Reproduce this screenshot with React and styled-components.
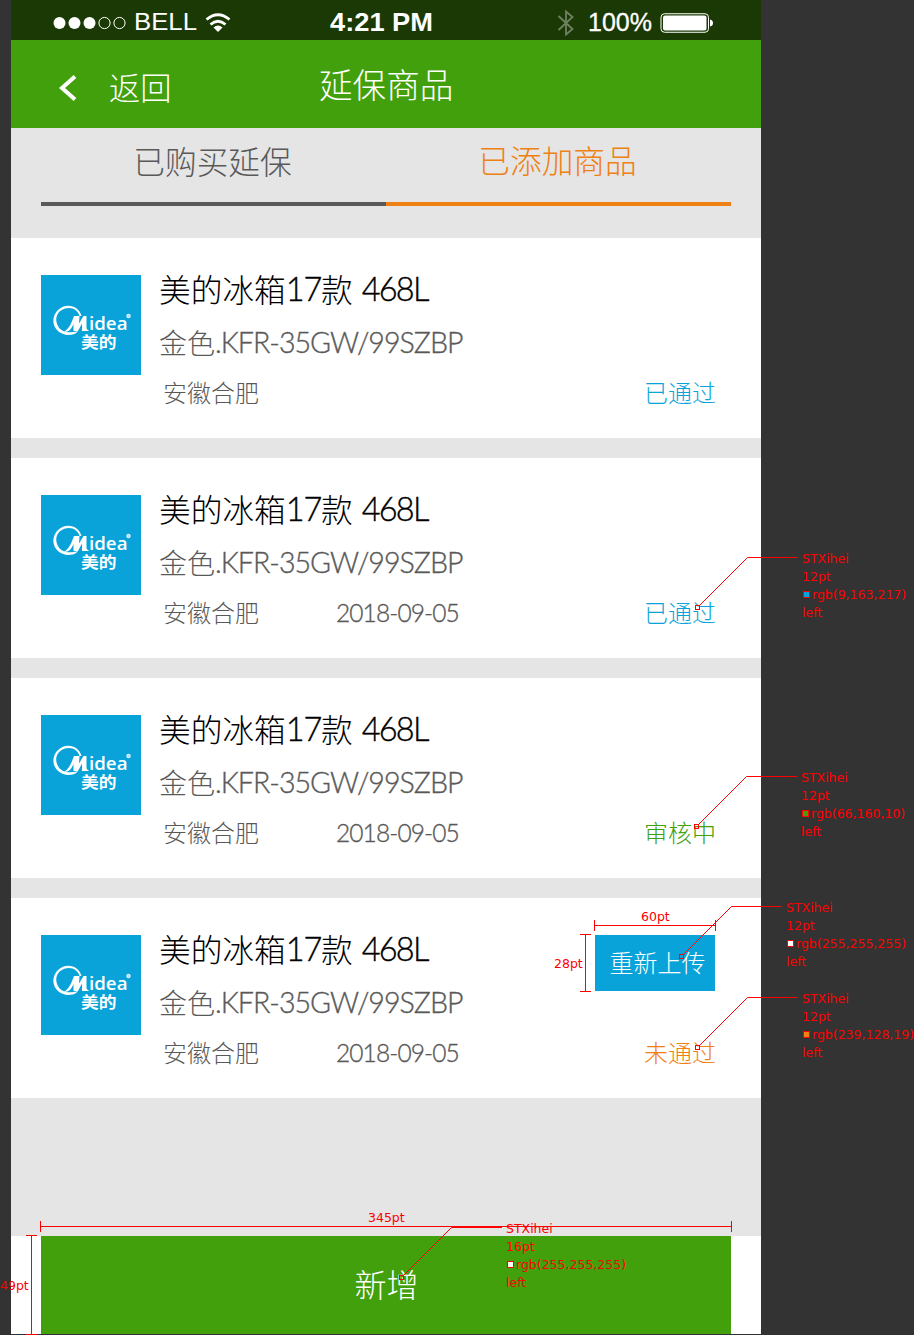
import React from 'react';
import styled, { createGlobalStyle } from 'styled-components';

const GlobalStyle = createGlobalStyle`
  *, *::before, *::after { box-sizing: border-box; }
  body { margin: 0; background: #333333; }
`;

const color = {
  green: '#42a00c',
  blue: '#09a3d9',
  orange: '#ef8013',
  gray: '#595959',
  panel: '#e5e5e5',
  red: '#ff0000',
};

const Board = styled.div`
  position: relative;
  width: 914px;
  height: 1335px;
  padding-left: 11px;
  overflow: hidden;
  background: #333333;
  font-family: Lato, 'Noto Sans CJK SC', sans-serif;
  font-weight: 300;
  white-space: nowrap;
`;

const Phone = styled.main`
  display: flex;
  flex-direction: column;
  width: 750px;
  height: 1334px;
  background: ${color.panel};
`;

const StatusBar = styled.div`
  display: flex;
  align-items: center;
  height: 40px;
  padding: 5px 47px 0 41px;
  background: #1a3905;
  color: #fff;
  font-family: 'Liberation Sans', sans-serif;
  font-weight: 400;
`;

const Signal = styled.svg`
  width: 74px;
  height: 14px;
`;

const Carrier = styled.span`
  width: 71px;
  padding-left: 8px;
  font-size: 23px;
  transform: scaleX(1.12);
  transform-origin: 8px 50%;
`;

const Wifi = styled.svg`
  width: 26px;
  height: 20px;
  margin-left: 8px;
`;

const Clock = styled.span`
  width: 108px;
  margin-left: 99px;
  font-size: 25px;
  font-weight: 700;
  transform: scaleX(1.09);
  transform-origin: left;
`;

const Bluetooth = styled.svg`
  width: 18px;
  height: 28px;
  margin-left: auto;
`;

const Charge = styled.span`
  width: 65px;
  margin-left: 13px;
  font-size: 25px;
  -webkit-text-stroke: 0.3px #fff;
`;

const Battery = styled.svg`
  width: 54px;
  height: 20px;
  margin-left: 7px;
`;

const NavBar = styled.header`
  display: grid;
  grid-template-columns: 308px 1fr;
  align-items: center;
  height: 88px;
  background: ${color.green};
  color: #fff;
`;

const Back = styled.button`
  display: flex;
  align-items: center;
  gap: 31px;
  padding: 7px 0 0 47px;
  border: 0;
  background: none;
  color: inherit;
  font: inherit;
  font-size: 31.3px;
  line-height: 40px;
`;

const NavTitle = styled.h1`
  margin: 0;
  padding-top: 2px;
  font-size: 33.6px;
  font-weight: 300;
  line-height: 44px;
`;

const Tabs = styled.nav`
  display: flex;
  height: 110px;
  padding: 0 30px;
`;

const Tab = styled.a`
  flex: 1;
  height: 78px;
  padding-right: 2px;
  border-bottom: 4px solid ${(p) => p.$tint};
  color: ${(p) => p.$tint};
  font-size: 31.7px;
  line-height: ${(p) => p.$line}px;
  text-align: center;
`;

const List = styled.section`
  display: flex;
  flex-direction: column;
  gap: 20px;
  flex: 1;
`;

const Card = styled.article`
  display: flex;
  height: 200px;
  padding: 37px 45px 0 30px;
  background: #fff;
  color: ${color.gray};
`;

const Logo = styled.svg`
  flex: none;
  width: 100px;
  height: 100px;
  background: ${color.blue};
`;

const Info = styled.div`
  flex: 1;
  padding-left: 18px;
`;

const Name = styled.h2`
  margin: -6px 0 0;
  color: #000;
  font-size: 31.7px;
  font-weight: 300;
  line-height: 42px;
`;

const Latin = styled.span`
  margin-left: ${(p) => p.$lead || 0}px;
  font-size: ${(p) => p.$size}px;
  letter-spacing: ${(p) => p.$track}px;
  vertical-align: ${(p) => p.$rise || 0}px;
  line-height: 1;
  -webkit-text-stroke: 0.35px currentColor;
`;

const Model = styled.p`
  margin: 13px 0 0;
  font-size: 28px;
  line-height: 38px;
`;

const Meta = styled.div`
  display: flex;
  align-items: center;
  height: 32px;
  margin-top: 15px;
  padding-left: 4px;
  font-size: 24px;
  line-height: 32px;
`;

const City = styled.span`
  width: 173px;
`;

const Side = styled.div`
  display: flex;
  flex-direction: column;
  align-items: flex-end;
  justify-content: space-between;
  height: 134px;
`;

const Status = styled.span`
  margin-top: auto;
  color: ${(p) => p.$tint};
  font-size: 24px;
  line-height: 32px;
`;

const Upload = styled.button`
  width: 120px;
  height: 56px;
  margin-right: 1px;
  padding: 0 0 3px 5px;
  border: 0;
  background: ${color.blue};
  color: #fff;
  font: inherit;
  font-size: 24px;
`;

const Footer = styled.footer`
  display: flex;
  height: 98px;
  padding: 0 30px;
  background: #fff;
`;

const AddButton = styled.button`
  flex: 1;
  padding: 0 0 4px 1px;
  border: 0;
  background: ${color.green};
  color: #fff;
  font: inherit;
  font-size: 32px;
`;

const Marks = styled.svg`
  position: absolute;
  inset: 0;
  width: 914px;
  height: 1335px;
  fill: none;
  stroke: ${color.red};
  stroke-width: 1;
`;

const Label = styled.div`
  position: absolute;
  left: ${(p) => p.$x}px;
  top: ${(p) => p.$y}px;
  color: ${color.red};
  font: 400 12.5px/18px 'DejaVu Sans', sans-serif;
`;

const Note = styled(Label)`
  display: flex;
  flex-direction: column;
`;

const Swatch = styled.span`
  display: inline-block;
  width: 7px;
  height: 7px;
  margin: 0 2px 1px 1px;
  border: 1px solid ${color.red};
  background: ${(p) => p.$fill};
`;

const items = [
  { status: '已通过', tint: color.blue },
  { date: '2018-09-05', status: '已通过', tint: color.blue },
  { date: '2018-09-05', status: '审核中', tint: color.green },
  { date: '2018-09-05', status: '未通过', tint: color.orange, upload: true },
];

const notes = [
  { x: 802, y: 550, size: '12pt', rgb: '9,163,217', line: 'M798 557.5H747.5L699 606', dot: [695.5, 605.5] },
  { x: 801, y: 769, size: '12pt', rgb: '66,160,10', line: 'M797 776.5H746.5L698 825', dot: [694.5, 824.5] },
  { x: 786, y: 899, size: '12pt', rgb: '255,255,255', line: 'M782 906.5H731.5L683 955', dot: [679.5, 954.5] },
  { x: 802, y: 990, size: '12pt', rgb: '239,128,19', line: 'M798 997.5H747.5L699 1046', dot: [695.5, 1045.5] },
  { x: 506, y: 1220, size: '16pt', rgb: '255,255,255', line: 'M502 1227.5H451.5L403 1276', dot: [399.5, 1275.5] },
];

function MideaLogo() {
  return (
    <Logo viewBox="0 0 100 100" fill="#fff">
      <path d="M40.500 41C38 30 24 27 16 36C8 46 14 59 27 60C31 60 35 59 37 56C29 58.500 21 57.500 17.500 52C12.500 44 16 36 24 33.500C31 31.500 37 35 38.500 41Z" />
      <path d="M23 57C29 53 31 46 33 41H38.500L38 48.500L42.500 41H45.500V53Q45.500 55 47.500 55V56H41V48.500L37 56H32.500V49C30.500 54 28 57 23 57Z" />
      <text x="48" y="55" fontFamily="Open Sans, sans-serif" fontSize="18.5" fontWeight="600" textLength="38.5" lengthAdjust="spacingAndGlyphs">idea</text>
      <text x="40" y="73" fontFamily="Noto Sans CJK SC, sans-serif" fontSize="15.5" fontWeight="700" textLength="35.5" lengthAdjust="spacingAndGlyphs">美的</text>
      <circle cx="87.500" cy="41" r="1.500" fill="#8fd3ee" stroke="#d5effa" strokeWidth="1.500" />
    </Logo>
  );
}

export default function App() {
  return (
    <Board>
      <GlobalStyle />
      <Phone>
        <StatusBar>
          <Signal viewBox="0 0 74 14" fill="#fff">
            <circle cx="7.500" cy="7" r="6" />
            <circle cx="22.500" cy="7" r="6" />
            <circle cx="37.500" cy="7" r="6" />
            <circle cx="52.500" cy="7" r="5.600" fill="none" stroke="#fff" />
            <circle cx="67.500" cy="7" r="5.600" fill="none" stroke="#fff" />
          </Signal>
          <Carrier>BELL</Carrier>
          <Wifi viewBox="0 0 26 20" fill="none" stroke="#fff" strokeWidth="2.8">
            <path d="M1.500 6.500Q13 -3 24.500 6.500" />
            <path d="M5.500 11.500Q13 5 20.500 11.500" />
            <path d="M8.500 14.500Q13 10.500 17.500 14.500L13 19Z" fill="#fff" stroke="none" />
          </Wifi>
          <Clock>4:21 PM</Clock>
          <Bluetooth viewBox="0 0 18 28" fill="none" stroke="#6f8163" strokeWidth="1.8">
            <path d="M1.500 7L15.500 20L9 25.500V2.500L15.500 8L1.500 21" />
          </Bluetooth>
          <Charge>100%</Charge>
          <Battery viewBox="0 0 54 20">
            <rect x="1" y=".75" width="47.500" height="18.500" rx="3.500" fill="none" stroke="#fff" />
            <rect x="3" y="2.500" width="43.500" height="15" rx="2" fill="#fff" />
            <path d="M50 6.500Q53 7 53 10T50 13.500Z" fill="#fff" />
          </Battery>
        </StatusBar>
        <NavBar>
          <Back>
            <svg width="20" height="28" viewBox="0 0 20 28" fill="none" stroke="#fff" strokeWidth="4">
              <path d="M17 2.500L4 14L17 25.500" />
            </svg>
            返回
          </Back>
          <NavTitle>延保商品</NavTitle>
        </NavBar>
        <Tabs>
          <Tab $tint={color.gray} $line={69}>已购买延保</Tab>
          <Tab $tint={color.orange} $line={67}>已添加商品</Tab>
        </Tabs>
        <List>
          {items.map((item, i) => (
            <Card key={i}>
              <MideaLogo />
              <Info>
                <Name>
                  美的冰箱<Latin $size={32.5} $track={-1.2} $rise={1}>17</Latin>款
                  <Latin $size={32.5} $track={-1.8} $rise={1} $lead={2}> 468L</Latin>
                </Name>
                <Model>
                  金色<Latin $size={28.6} $track={-1} $rise={1}>.KFR-35GW/99SZBP</Latin>
                </Model>
                <Meta>
                  <City>安徽合肥</City>
                  {item.date && <Latin $size={24.5} $track={-0.9}>{item.date}</Latin>}
                </Meta>
              </Info>
              <Side>
                {item.upload && <Upload>重新上传</Upload>}
                <Status $tint={item.tint}>{item.status}</Status>
              </Side>
            </Card>
          ))}
        </List>
        <Footer>
          <AddButton>新增</AddButton>
        </Footer>
      </Phone>

      <Marks viewBox="0 0 914 1335">
        {notes.map((n) => (
          <g key={n.line}>
            <path d={n.line} />
            <rect x={n.dot[0]} y={n.dot[1]} width="4" height="4" />
          </g>
        ))}
        <path d="M594.500 920V931M715.500 920V931M594.500 925.500H715.500" />
        <path d="M580 934.500H591M580 991.500H591M585.500 934.500V991.500" />
        <path d="M40.500 1221V1232M731.500 1221V1232M40.500 1226.500H731.500" />
        <path d="M26 1235.500H37M26 1334.500H37M31.500 1235.500V1334.500" />
      </Marks>
      {notes.map((n) => (
        <Note key={n.line} $x={n.x} $y={n.y}>
          <span>STXihei</span>
          <span>{n.size}</span>
          <span><Swatch $fill={`rgb(${n.rgb})`} />rgb({n.rgb})</span>
          <span>left</span>
        </Note>
      ))}
      <Label $x={641} $y={908}>60pt</Label>
      <Label $x={554} $y={955}>28pt</Label>
      <Label $x={368} $y={1209}>345pt</Label>
      <Label $x={0} $y={1277}>49pt</Label>
    </Board>
  );
}
